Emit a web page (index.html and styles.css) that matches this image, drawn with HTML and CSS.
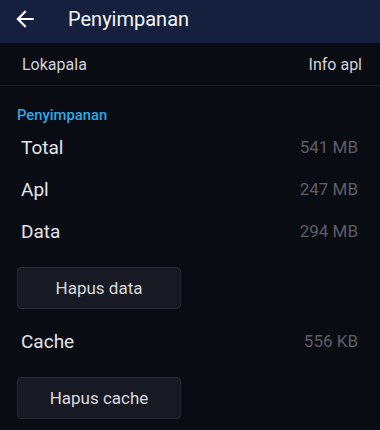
FILE: index.html
```html
<!DOCTYPE html>
<html lang="id">
<head>
  <meta charset="UTF-8">
  <meta name="viewport" content="width=device-width, initial-scale=1.0">
  <title>Penyimpanan</title>
  <link rel="stylesheet" href="styles.css">
</head>
<body>
  <div class="appbar">
    <svg class="back" viewBox="0 0 24 24" width="26" height="26">
      <path d="M20 11H7.83l5.59-5.59L12 4l-8 8 8 8 1.41-1.41L7.83 13H20v-2z" fill="#ffffff"/>
    </svg>
    <div class="title">Penyimpanan</div>
  </div>

  <div class="subbar">
    <span>Lokapala</span>
    <span>Info apl</span>
  </div>

  <div class="section">
    <div class="section-title">Penyimpanan</div>
    <div class="row"><span class="label">Total</span><span class="value">541 MB</span></div>
    <div class="row"><span class="label">Apl</span><span class="value">247 MB</span></div>
    <div class="row"><span class="label">Data</span><span class="value">294 MB</span></div>
    <button class="btn">Hapus data</button>
    <div class="row cache"><span class="label">Cache</span><span class="value">556 KB</span></div>
    <button class="btn">Hapus cache</button>
  </div>
</body>
</html>
```

FILE: styles.css
```css
body {
  margin: 0;
  font-family: Roboto, 'Noto Sans', sans-serif;
  background-color: #0a0c14;
  color: #e2e2e6;
  height: 430px;
  overflow: hidden;
}
.appbar {
  height: 43px;
  background-color: #14203d;
  display: flex;
  align-items: center;
}
.back {
  margin-left: 12px;
  margin-top: -6px;
}
.title {
  margin-left: 30px;
  font-size: 20px;
  color: #f4f4f6;
  margin-top: -6px;
}
.subbar {
  height: 42px;
  display: flex;
  justify-content: space-between;
  align-items: center;
  padding: 0 18px 0 22px;
  font-size: 16px;
  color: #d2d3d8;
  border-bottom: 1px solid #1b1e27;
}
.section {
  padding: 0 22px 0 17px;
}
.section-title {
  color: #2fa9e6;
  font-size: 14.8px;
  font-weight: 500;
  margin-top: 21px;
  height: 16px;
  line-height: 16px;
}
.row {
  display: flex;
  justify-content: space-between;
  align-items: center;
  height: 42px;
  padding-left: 4px;
}
.section-title + .row { margin-top: 3px; }
.label {
  font-size: 19px;
  color: #e4e4e8;
}
.value {
  font-size: 17px;
  color: #5c5e65;
}
.btn {
  display: block;
  width: 164px;
  height: 42px;
  margin-top: 15px;
  background-color: #181a23;
  border: 1px solid #262832;
  border-radius: 4px;
  color: #d8d9de;
  font-family: Roboto, sans-serif;
  font-size: 17px;
  padding: 0;
}
.cache {
  margin-top: 11px;
}
.cache + .btn { margin-top: 15px; }
```
